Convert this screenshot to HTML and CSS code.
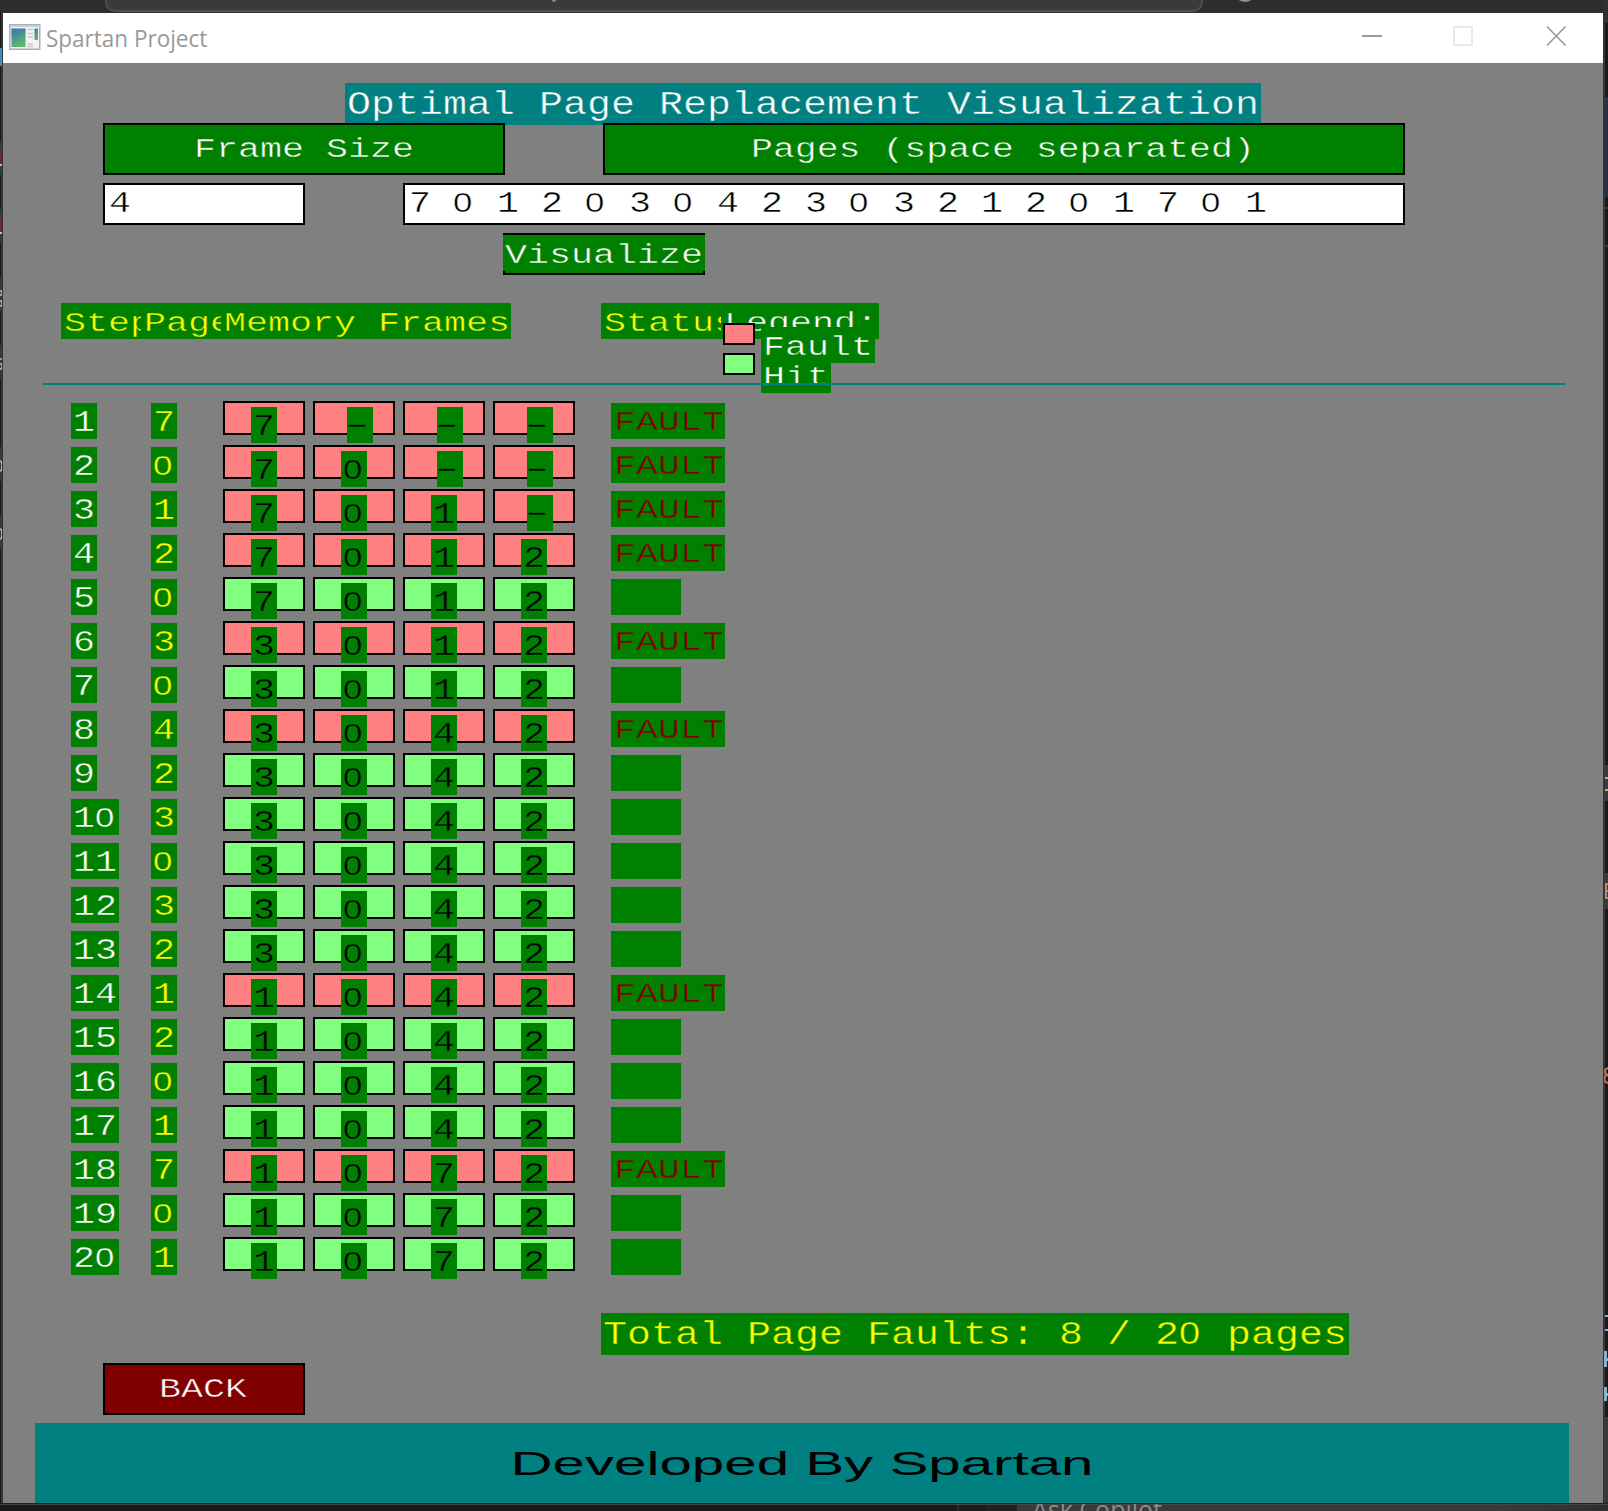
FILE: index.html
```html
<!DOCTYPE html>
<html lang="en">
<head>
<meta charset="utf-8">
<title>Spartan Project</title>
<link rel="stylesheet" href="styles.css">
</head>
<body>
<div class="desktop">
  <div class="searchbox"></div>
  <div class="dot"></div>
  <div class="avatar"></div>
  <svg class="edge edge-left" width="3" height="1511" viewBox="0 0 3 1511">
    <rect width="3" height="1511" fill="#38383a"/><rect width="1" height="1511" fill="#191919"/>
    <g fill="#2f3b49"><rect y="141" width="3" height="34"/><rect y="209" width="3" height="34"/><rect y="277" width="3" height="34"/><rect y="345" width="3" height="34"/><rect y="447" width="3" height="34"/><rect y="515" width="3" height="34"/></g>
    <rect y="48" width="3" height="18" fill="#3d8fb8"/>
    <g fill="#6e2836"><rect y="149" width="1" height="14"/><rect y="217" width="1" height="14"/></g>
    <g fill="#c3c196"><rect y="164" width="3" height="2"/><rect y="232" width="3" height="2"/></g>
    <g fill="none" stroke="#c3c196" stroke-width="1.500"><path d="M0 291h2v4h-2M0 301h2v5h-2M0 359h3M0 364h2v5h-2M0 461c2 0 2 2 2 5s0 5-2 5M0 529c2 0 2 2 2 5s0 5-2 5"/></g>
  </svg>
  <svg class="edge edge-right" width="5" height="1511" viewBox="0 0 5 1511">
    <rect width="5" height="1511" fill="#191919"/><rect width="2" height="1511" fill="#383838"/>
    <rect y="0" width="5" height="23" fill="#303030"/>
    <rect y="97" width="5" height="100" fill="#26323f"/>
    <g fill="#39393b"><rect y="207" width="5" height="2"/><rect y="245" width="5" height="2"/><rect y="765" width="5" height="36"/><rect y="873" width="5" height="36"/><rect y="1417" width="5" height="94"/></g>
    <g fill="#9fbd91"><rect x="2" y="777" width="3" height="2"/><rect x="2" y="789" width="3" height="2"/></g>
    <path d="M3 883v16M3 884h2M3 891h2M3 898h2" stroke="#c18468" stroke-width="2"/>
    <path d="M5 1068c-4 1-4 6 0 7c-5 1-5 7 0 8" stroke="#c1714e" stroke-width="2" fill="none"/>
    <g fill="#84b6cf"><rect x="2" y="1315" width="3" height="2"/><rect x="2" y="1329" width="3" height="2"/><rect x="1" y="1351" width="3" height="16"/><rect x="4" y="1358" width="1" height="3"/><rect x="1" y="1387" width="3" height="14"/><rect x="4" y="1393" width="1" height="3"/></g>
  </svg>
  <div class="taskbar"><span class="copilot">Ask Copilot</span></div>
</div>

<main class="window">
  <header class="titlebar">
    <svg class="appicon" width="32" height="26" viewBox="0 0 32 26">
      <defs><linearGradient id="g" x1="0" y1="0" x2=".4" y2="1"><stop offset="0" stop-color="#3979a8"/><stop offset="1" stop-color="#5cb573"/></linearGradient></defs>
      <rect x=".75" y=".75" width="30" height="24.500" fill="#f3f3f4" stroke="#a9afb6" stroke-width="1.500"/>
      <path d="M1 2h30" stroke="#c9cdd2" stroke-width="2"/>
      <rect x="2.500" y="4.500" width="14" height="18.500" fill="url(#g)"/>
      <path d="M2.500 14c5-4 9-5 14-5v-4.500h-14z" fill="#3f82a5" opacity=".5"/>
      <path d="M18.500 5.500h5.500M18.500 9.500h5.500M18.500 13h5.500M18.500 20h5.500M18.500 22.500h5.500" stroke="#c8c8ca" stroke-width="1.500"/>
      <rect x="25.500" y="4.500" width="3.500" height="11.500" fill="url(#g)"/>
    </svg>
    <span class="caption">Spartan Project</span>
    <svg class="controls" width="206" height="22" viewBox="0 0 206 22" fill="none">
      <path d="M0 11h20" stroke="#999" stroke-width="2"/>
      <rect x="92" y="2" width="18" height="18" stroke="#e9e9e9" stroke-width="2"/>
      <path d="M185 1.500l18.500 19M203.500 1.500l-18.500 19" stroke="#999" stroke-width="1.600"/>
    </svg>
  </header>

  <section class="client">
    <h1 class="tag big title"><span>Optimal Page Replacement Visualization</span></h1>
    <div class="row captions">
      <div class="box frame-caption"><span>Frame Size</span></div>
      <div class="box pages-caption"><span>Pages (space separated)</span></div>
    </div>
    <div class="row inputs">
      <div class="field frame-field"><span>4</span></div>
      <div class="field pages-field"><span>7 <b>0</b> 1 2 <b>0</b> 3 <b>0</b> 4 2 3 <b>0</b> 3 2 1 2 <b>0</b> 1 7 <b>0</b> 1</span></div>
    </div>
    <div class="visualize"><div class="tag"><span>Visualize</span></div></div>

    <div class="heads">
      <div class="tag yellow h-step"><span>Step</span></div>
      <div class="tag yellow h-page"><span>Page</span></div>
      <div class="tag yellow h-frames"><span>Memory Frames</span></div>
      <div class="tag yellow h-status"><span>Status</span></div>
      <div class="tag h-legend"><span>Legend:</span></div>
      <div class="legend">
        <i class="swatch fault"></i><div class="tag h-fault"><span>Fault</span></div>
        <i class="swatch hit"></i><div class="tag h-hit"><span>Hit</span></div>
      </div>
    </div>
    <div class="rule"></div>

    <div class="steps" id="steps"></div>

    <div class="tag big yellow total"><span>Total Page Faults: 8 / 2<b>0</b> pages</span></div>
    <div class="box back"><span>BACK</span></div>
    <footer class="footer"><svg width="1534" height="80"><text x="475.500" y="52" textLength="583" lengthAdjust="spacingAndGlyphs">Developed By Spartan</text></svg></footer>
  </section>
</main>
<script src="app.js"></script>
</body>
</html>
```
FILE: styles.css
```css
* { box-sizing: border-box; }
body { margin: 0; background: #191919; overflow: hidden; font: 27px/42px "Liberation Mono", "Courier New", monospace; }
h1 { margin: 0; font-weight: normal; }

.desktop { position: absolute; inset: 0; background: linear-gradient(#2d2d2d 0 13px, #191919 13px); overflow: hidden; }
.desktop > * { position: absolute; }
.searchbox { left: 105px; top: -30px; width: 1098px; height: 42px; background: #3a3a3a; border: 2px solid #505050; border-radius: 10px; }
.dot { left: 552px; top: 0; width: 4px; height: 2px; background: #8a8a8a; border-radius: 0 0 2px 2px; }
.avatar { left: 1234px; top: -20px; width: 22px; height: 22px; border-radius: 50%; background: #8d8d8d; }
.edge-left { left: 0; top: 0; clip-path: inset(12px 0 8px 0); }
.edge-right { right: 0; top: 0; }
.taskbar { left: 0; right: 0; bottom: 0; height: 8px; overflow: hidden; border-top: 1px solid #222; background: linear-gradient(#454545 0 1px, transparent 1px), linear-gradient(90deg, #191919 0 957px, #2a2a2a 957px 959px, #1c1c1c 959px 985px, #222 985px 1017px, #3a3a3a 1017px 1500px, #2f2f2f 1608px); }
.copilot { position: absolute; left: 1032px; top: -11px; font: 25px/32px "Open Sans", "Noto Sans", sans-serif; color: #8b8b8b; white-space: nowrap; }

.window { position: relative; width: 1600px; height: 1490px; margin: 13px 0 0 3px; background: #808080; outline: 1px solid #333; }
.titlebar { display: flex; align-items: center; height: 50px; padding: 0 35px 0 6px; background: #fff; }
.appicon { display: block; margin-bottom: 3px; }
.caption { margin-left: 5px; font: 23.5px/50px "Open Sans", "Noto Sans", sans-serif; color: #999; transform: scaleX(.957); transform-origin: left; }
.controls { display: block; margin: 0 0 5px auto; }

.client { display: flex; flex-direction: column; align-items: flex-start; height: 1440px; padding-top: 20px; }
.row { display: flex; }

/* opaque text cells, glyphs stretched to the fixed 22px / 24px column */
.tag { flex: none; isolation: isolate; height: 36px; padding-left: 2px; background: #008000; color: #fff; -webkit-text-stroke: .45px #008000; }
.tag span, .box span, .field span { display: inline-block; white-space: pre; transform: scaleX(1.3578); transform-origin: left; }
.tag.num span, .field span { font-size: 30px; transform: scaleX(1.222); }
.tag.num { line-height: 40px; }
.tag.num.dash span { transform: scaleX(2.1); transform-origin: 10px; }
.tag.big { height: 42px; font-size: 33px; line-height: 46px; }
.tag.big span { transform: scaleX(1.2119); }
/* plain zero, kept to the monospaced advance */
b { font-family: "Liberation Sans", Arial, sans-serif; font-weight: normal; font-size: .95em; letter-spacing: .0755em; line-height: 1; }
.yellow { color: #ff0; }
.red { color: #800000; }
.black { color: #000; }

.title { width: 916px; margin-left: 342px; background: #008080; -webkit-text-stroke-color: #008080; }
.captions { gap: 98px; margin: -2px 0 0 100px; isolation: isolate; }
.box { height: 52px; border: 2px solid #000; background: #008000; color: #fff; line-height: 50px; -webkit-text-stroke: .45px #008000; }
.frame-caption { width: 402px; padding-left: 89px; }
.pages-caption { width: 802px; padding-left: 146px; }
.pages-caption span { transform: scaleX(1.352); }
.inputs { gap: 98px; margin: 8px 0 0 100px; }
.field { height: 42px; padding-left: 4px; border: 2px solid #000; background: #fff; color: #000; line-height: 38px; -webkit-text-stroke: .45px #fff; }
.frame-field { width: 202px; }
.pages-field { width: 1002px; }
.visualize { width: 202px; height: 42px; margin: 8px 0 0 500px; border: solid #000; border-width: 2px 0; background: linear-gradient(90deg, #000 0 2px, #008000 2px 200px, #000 200px); }

.heads { position: relative; display: flex; margin: 28px 0 0 58px; }
.heads > .tag { padding-left: 3px; }
.h-step { width: 92px; margin-right: -12px; }
.h-page { width: 92px; margin-right: -12px; }
.h-frames { width: 290px; margin-right: 90px; }
.h-status { width: 136px; margin-right: -16px; }
.h-legend { width: 158px; }
.legend { position: absolute; left: 662px; top: 20px; display: grid; grid-template-columns: 38px auto; grid-auto-rows: 30px; }
.swatch { width: 32px; height: 22px; border: 2px solid #000; position: relative; }
.legend .tag { margin-top: 4px; }
.h-fault { width: 114px; }
.h-hit { width: 70px; }
.fault { background: #ff8080; }
.hit { background: #80ff80; }
.rule { position: relative; width: 1522px; height: 2px; margin: 44px 0 0 40px; background: #008080; }

.steps { display: flex; flex-direction: column; gap: 10px; margin: 16px 0 0 68px; }
.step { display: grid; grid-template-columns: 80px 72px auto; height: 34px; }
.step > .tag { margin-top: 2px; justify-self: start; width: calc(var(--n) * 22px + 4px); }
.cells { display: flex; gap: 8px; }
.cell { width: 82px; height: 34px; border: 2px solid #000; }
.cell .tag { width: 26px; margin: 4px 0 0 26px; }
.cell .tag.dash { margin-left: 32px; line-height: 38px; }
.cells .status { margin: 2px 0 0 28px; width: calc(var(--n) * 22px + 4px); padding-left: 3px; line-height: 41px; }

.total { width: 748px; margin: 42px 0 0 598px; }
.back { width: 202px; margin: 8px 0 0 100px; padding-left: 54px; background: #800000; -webkit-text-stroke-color: #800000; }
.footer { width: 1534px; height: 80px; margin: 8px 0 0 32px; background: #008080; }
.footer svg { display: block; }
.footer text { font: 34px "Liberation Sans", Arial, sans-serif; fill: #000; }
```
FILE: app.js
```js
const pages = [7, 0, 1, 2, 0, 3, 0, 4, 2, 3, 0, 3, 2, 1, 2, 0, 1, 7, 0, 1];
const frames = ["7---", "70--", "701-", "7012", "7012", "3012", "3012", "3042", "3042", "3042",
  "3042", "3042", "3042", "1042", "1042", "1042", "1042", "1072", "1072", "1072"];
const faults = new Set([1, 2, 3, 4, 6, 8, 14, 18]);

const tag = (text, cls, n) =>
  `<div class="tag ${cls}" style="--n:${n}"><span>${String(text).replace(/0/g, "<b>0</b>")}</span></div>`;

document.getElementById("steps").innerHTML = pages.map((page, i) => {
  const step = i + 1;
  const fault = faults.has(step);
  const cells = [...frames[i]].map(f =>
    `<div class="cell ${fault ? "fault" : "hit"}">${tag(f, "num black" + (f === "-" ? " dash" : ""), 1)}</div>`).join("");
  return `<div class="step">${tag(step, "num", String(step).length)}${tag(page, "num yellow", 1)}` +
    `<div class="cells">${cells}${fault ? tag("FAULT", "red status", 5) : tag("", "status", 3)}</div></div>`;
}).join("");
```
